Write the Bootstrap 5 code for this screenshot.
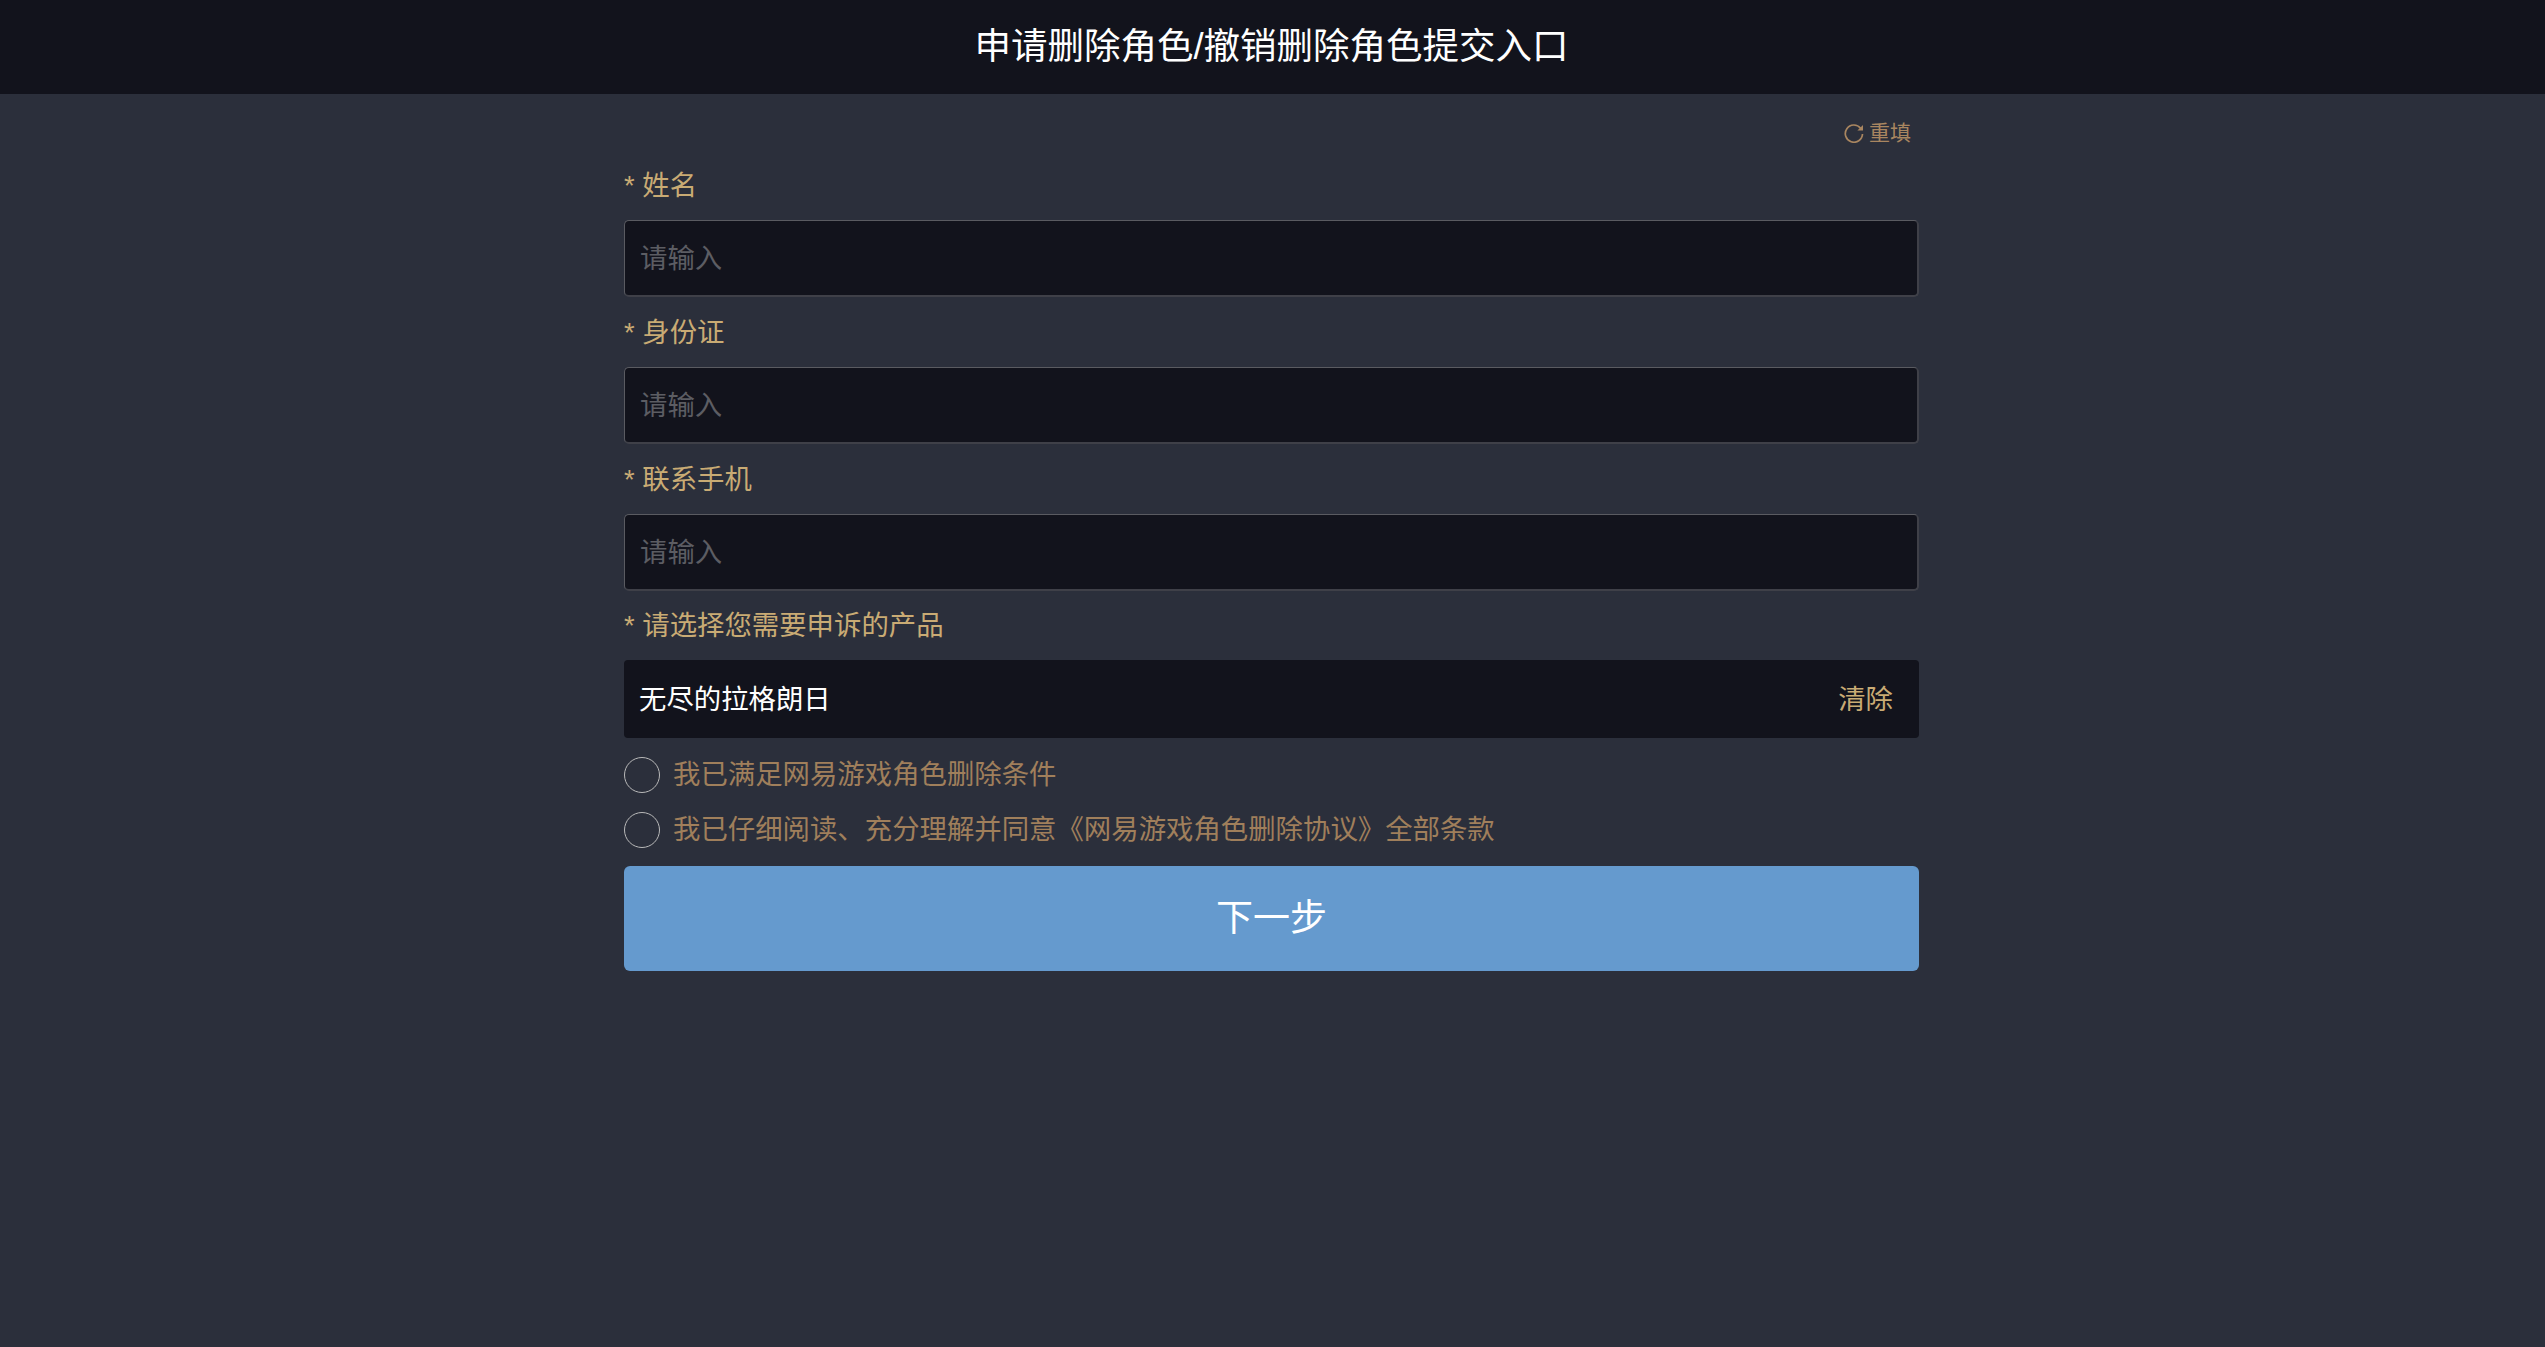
<!DOCTYPE html>
<html lang="zh-CN">
<head>
<meta charset="utf-8">
<title>申请删除角色</title>
<link href="https://cdn.jsdelivr.net/npm/bootstrap@5.3.0/dist/css/bootstrap.min.css" rel="stylesheet">
<style>
html,body{height:100%}
body{background:#2b2f3b;font-family:"Liberation Sans","Noto Sans CJK SC",sans-serif;font-size:27.4px;color:#c9ab74}
.top-bar{height:94px;background:#12131c;color:#fff;font-size:36.5px;padding-right:2px}
.form-wrap{width:1295px;margin-left:624px}
.reset-row{height:56px;padding-top:22px;padding-right:8px;color:#a98660;font-size:21px;gap:5px}
.field-label{height:70px;color:#c9ab74;line-height:1;padding-top:1px}
.field-label.last-label{height:69px}
.form-control.dark-input{height:77px;background:#12131c;border-style:solid;border-width:1px 2px 2px 1px;border-color:#5a5b61 #3f4048 #3f4048 #5a5b61;border-radius:5px;padding:2px 15px 0;font-size:27.4px;color:#fff;box-shadow:none}
.dark-input::placeholder{color:#5c5d63;opacity:1}
.product-box{height:78px;background:#12131c;border-radius:4px;padding:1px 26px 0 15px;color:#fff}
.clear-link{color:#c9ab74}
.check-row{height:37px;color:#a07f5b;gap:13px;margin-top:18px}
.check-dot{width:36px;height:36px;border:1.5px solid #b9b9b9;border-radius:50%;flex:none}
.next-btn.btn{height:105px;margin-top:18px;background:#659ace;border:0;border-radius:6px;color:#fff;font-size:37px}
</style>
</head>
<body>
<header class="top-bar d-flex align-items-center justify-content-center">申请删除角色/撤销删除角色提交入口</header>
<main class="form-wrap">
  <div class="reset-row d-flex align-items-center justify-content-end">
    <svg width="20" height="20" viewBox="0 0 20 20" fill="none" stroke="#a98660" stroke-width="1.7"><path d="M16.6 5.2A8.6 8.6 0 1 0 18.5 11"/><path d="M19 2v5.6h-5.6z" fill="#a98660" stroke="none"/></svg>
    <span>重填</span>
  </div>
  <label class="field-label d-flex align-items-center w-100" for="f1">*&nbsp;姓名</label>
  <input id="f1" class="form-control dark-input" type="text" placeholder="请输入">
  <label class="field-label d-flex align-items-center w-100" for="f2">*&nbsp;身份证</label>
  <input id="f2" class="form-control dark-input" type="text" placeholder="请输入">
  <label class="field-label d-flex align-items-center w-100" for="f3">*&nbsp;联系手机</label>
  <input id="f3" class="form-control dark-input" type="text" placeholder="请输入">
  <div class="field-label last-label d-flex align-items-center">*&nbsp;请选择您需要申诉的产品</div>
  <div class="product-box d-flex align-items-center justify-content-between">
    <span>无尽的拉格朗日</span><span class="clear-link">清除</span>
  </div>
  <div class="check-row d-flex align-items-center"><span class="check-dot"></span><span>我已满足网易游戏角色删除条件</span></div>
  <div class="check-row d-flex align-items-center"><span class="check-dot"></span><span>我已仔细阅读、充分理解并同意《网易游戏角色删除协议》全部条款</span></div>
  <button class="next-btn btn w-100 d-block" type="button">下一步</button>
</main>
<script src="https://cdn.jsdelivr.net/npm/bootstrap@5.3.0/dist/js/bootstrap.bundle.min.js"></script>
</body>
</html>
